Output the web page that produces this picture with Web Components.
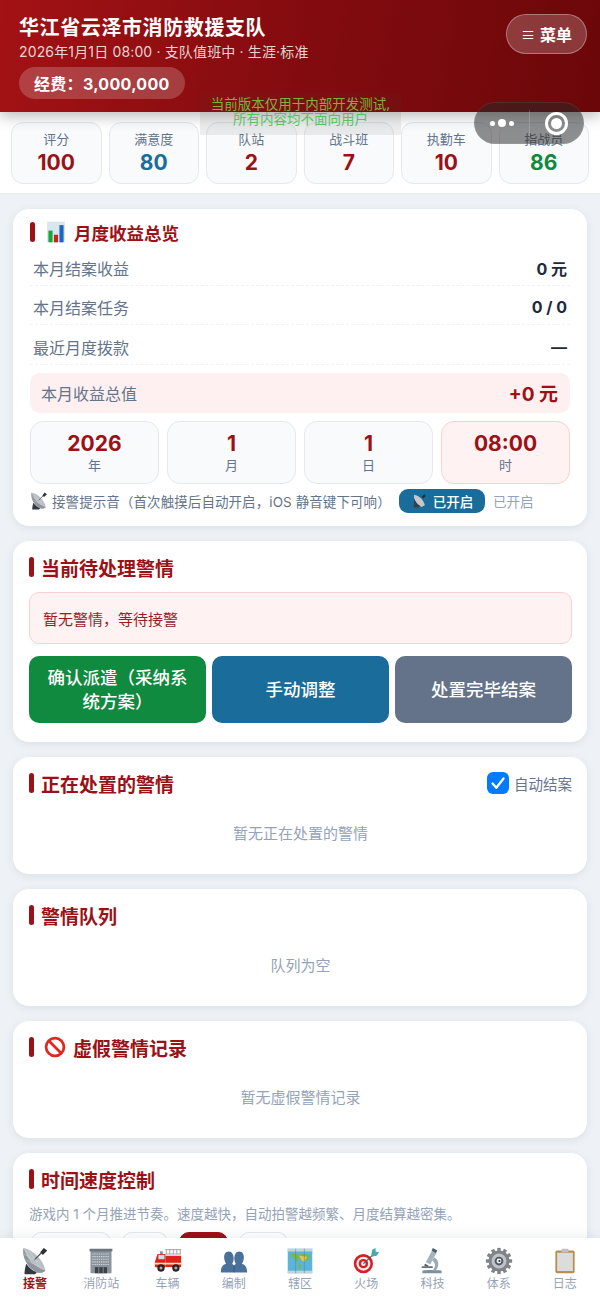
<!DOCTYPE html>
<html lang="zh-CN"><head><meta charset="utf-8"><title>消防救援支队</title>
<style>
html,body{margin:0;height:100%;}
body{font-family:Inter,"Noto Sans CJK SC",sans-serif;background:#eef2f6;overflow:hidden;}
</style></head><body>
<x-app></x-app>
<script>
const ICONS={
dish:`<path d="M3 1C1 9 5 22 18 29c4 1 8 0 10-2C26 15 14 3 3 1z" fill="#b9bfc5"/><path d="M3 1C6 12 15 23 28 27c-2 2-6 3-10 2C5 22 1 9 3 1z" fill="#8f969d"/><path d="M15 15 24 6" stroke="#555" stroke-width="1.500"/><path d="m22 6 4-5 4 3-5 5z" fill="#2e3135"/><path d="M6 19c-1 4-2 7-2 12h12l2-2C13 27 9 23 6 19z" fill="#34393f"/><path d="M4 2l9 17M10 5l10 16M3 8l19 10M6 15l20 10" stroke="#d6dade" stroke-width=".5"/>`,
building:`<rect x="4" y="4" width="24" height="26" fill="#8b949c"/><rect x="3" y="2" width="26" height="3" fill="#6c747c"/><path d="M6 8h20M6 11h20M6 14h20M6 17h20M6 20h20" stroke="#d0d6dc" stroke-width="1.300" stroke-dasharray="1.500 1"/><rect x="9" y="23" width="14" height="7" fill="#3c4248"/><path d="M13.500 23v7M18.500 23v7" stroke="#8b949c"/>`,
truck:`<rect x="13" y="10" width="18" height="13" fill="#e0201c"/><path d="M13 3h18M14 3v5M18 3v5M22 3v5M26 3v5M30 3v5M13 8h18" stroke="#999" stroke-width="1"/><path d="M2 14l2-6h9v15H1v-6z" fill="#e0201c"/><rect x="5" y="9" width="7" height="5" fill="#bfe3ee"/><rect x="7" y="5" width="3" height="3" fill="#4a90c4"/><rect x="1" y="18" width="30" height="2" fill="#f3e8a0"/><circle cx="8" cy="24" r="4.200" fill="#222"/><circle cx="8" cy="24" r="1.800" fill="#aaa"/><circle cx="25" cy="24" r="4.200" fill="#222"/><circle cx="25" cy="24" r="1.800" fill="#aaa"/>`,
busts:`<path d="M1 29c0-6 2-9 6-10-3-3-4-14 3-14 6 0 7 10 4 14l2 2 2-2c-3-4-2-14 4-14 7 0 6 11 3 14 4 1 6 4 6 10z" fill="#4a7199"/><path d="M16 21v8" stroke="#2f587f" stroke-width="1"/>`,
map:`<rect x="2" y="2" width="28" height="28" fill="#5ab4dc"/><path d="M2 2h28v3H2zM2 27h28v3H2z" fill="#c8d2d6"/><path d="M6 7l8 1 1 6-3 4-2-4-4-3zM14 19l3 1-1 6-2-2zM17 7l10 2-1 6-5 1-4-3z" fill="#7db840"/><path d="M15 10l9 1-3 6-3-2z" fill="#eec43c"/><path d="M11 2v28M21 2v28" stroke="#3b87ab" stroke-width=".6"/>`,
dart:`<circle cx="13" cy="19" r="11" fill="#d81f26"/><circle cx="13" cy="19" r="8" fill="#f4f0ee"/><circle cx="13" cy="19" r="5.400" fill="#d81f26"/><circle cx="13" cy="19" r="2.600" fill="#f4f0ee"/><path d="M13 19 24 9" stroke="#555" stroke-width="1.400"/><path d="m22 10 1-7 4-2 0 4 4 1-3 4-6 1z" fill="#4aa8b0"/>`,
scope:`<path d="M5 27c5-1 16-1 22 0v3H5z" fill="#7d909c"/><path d="M19 12c5 3 6 10 1 15h-4c5-4 4-9 0-12z" fill="#9aabb5"/><path d="M16 4l5 3-7 13-5-3z" fill="#a6b4bc"/><path d="m17 1 5 3-1.500 3-5-3z" fill="#4d5f6b"/><path d="M8 19l4 2-1 2-4-2z" fill="#4d5f6b"/><rect x="4" y="22" width="13" height="2" rx="1" fill="#5f7380"/>`,
gear:`<g fill="#808489"><circle cx="16" cy="16" r="12"/><rect x="14" y="1" width="4" height="30"/><rect x="14" y="1" width="4" height="30" transform="rotate(30 16 16)"/><rect x="14" y="1" width="4" height="30" transform="rotate(60 16 16)"/><rect x="14" y="1" width="4" height="30" transform="rotate(90 16 16)"/><rect x="14" y="1" width="4" height="30" transform="rotate(120 16 16)"/><rect x="14" y="1" width="4" height="30" transform="rotate(150 16 16)"/></g><circle cx="16" cy="16" r="8.500" fill="#c0c4c8"/><circle cx="16" cy="16" r="5" fill="#55595e"/><circle cx="16" cy="16" r="2.800" fill="#f2f2f2"/><circle cx="16.500" cy="16" r="1.200" fill="#333"/>`,
clip:`<rect x="5" y="4" width="22" height="26" rx="2" fill="#b98c4e"/><rect x="7" y="6.500" width="18" height="21" fill="#dcdcdc"/><rect x="12" y="2" width="8" height="4" rx="1" fill="#c0c0c0"/>`,
chart:`<rect x="3" y="1" width="26" height="30" fill="#d9e6ee"/><rect x="5" y="14" width="6" height="17" fill="#14a83a"/><rect x="13" y="20" width="6" height="11" fill="#d0201c"/><rect x="21" y="6" width="6" height="25" fill="#1a66c0"/>`,
ban:`<circle cx="16" cy="16" r="13" fill="#fff" stroke="#e0281f" stroke-width="4"/><path d="M7 7l18 18" stroke="#e0281f" stroke-width="4"/>`,
speaker:`<path d="M6 5c-2 7 3 18 14 23l6-3C24 15 15 6 6 5z" fill="#c3c8cd"/><path d="M6 12c2 6 6 11 11 14l-3 3H5z" fill="#3a3f45"/><path d="m20 9 5-5 3 3-5 5z" fill="#2a2d31"/>`
};
const def=(n,html,extra)=>{customElements.define(n,class extends HTMLElement{
  constructor(){super();this.attachShadow({mode:'open'});}
  connectedCallback(){this.shadowRoot.innerHTML=typeof html==='function'?html(this):html;extra&&extra(this);}
});};
const a=(e,n,d='')=>e.getAttribute(n)??d;

def('x-icon',e=>`<style>:host{display:inline-flex;flex:none;width:${a(e,'size',24)}px;height:${a(e,'size',24)}px}svg{width:100%;height:100%;display:block}</style><svg viewBox="0 0 32 32" aria-hidden="true">${ICONS[a(e,'name')]||''}</svg>`);

def('x-header',`<style>
:host{display:flex;justify-content:space-between;align-items:flex-start;box-sizing:border-box;height:112px;padding:14px 13px 0 19px;color:#fff;background:linear-gradient(100deg,#a31214 0%,#860c10 45%,#6b0709 100%);box-shadow:0 4px 14px rgba(0,0,0,.28);position:relative;z-index:2;flex:none}
.t{font-size:20px;font-weight:700;line-height:28px;letter-spacing:.6px}
.s{font-size:14px;line-height:20px;color:rgba(255,255,255,.82);letter-spacing:.15px}
.p{display:inline-flex;align-items:center;height:32px;margin-top:5px;padding:0 15px;border-radius:16px;background:rgba(255,255,255,.2);font-size:16px;font-weight:700;letter-spacing:.3px}
.m{box-sizing:border-box;width:81px;height:40px;border-radius:20px;background:rgba(255,255,255,.2);border:1.500px solid rgba(255,255,255,.32);display:flex;align-items:center;justify-content:center;gap:5px;font-size:16px;font-weight:700}
</style><div><div class="t">华江省云泽市消防救援支队</div><div class="s">2026年1月1日 08:00 · 支队值班中 · 生涯·标准</div><div class="p">经费：3,000,000</div></div><div class="m"><span style="font-size:14px;font-weight:400">≡</span><span>菜单</span></div>`);

def('x-stat',e=>`<style>:host{display:flex;flex-direction:column;align-items:center;justify-content:center;box-sizing:border-box;height:62px;border:1.500px solid #e4e9ef;border-radius:12px;background:#f8fafc;min-width:0}
.l{font-size:13px;line-height:18px;color:#64748b}.v{font-size:21px;font-weight:700;line-height:28px;padding-top:1px;color:${a(e,'color','#9b1116')}}</style><div class="l">${a(e,'label')}</div><div class="v">${a(e,'value')}</div>`);

def('x-stats',`<style>:host{display:grid;grid-template-columns:repeat(6,1fr);gap:7px;box-sizing:border-box;height:82px;padding:10px 11px;background:#fff;flex:none;border-bottom:1px solid #e8ecf1}</style><slot></slot>`);

def('x-card',e=>`<style>:host{display:block;box-sizing:border-box;background:#fff;border-radius:16px;padding:${a(e,'pad','13px 15px 0 16px')};box-shadow:0 2px 8px rgba(30,50,80,.09);height:${a(e,'h','auto')};flex:none}
.h{display:flex;align-items:center;height:26px;margin-bottom:1px;color:#9b1116;font-size:${a(e,'fs','19px')};font-weight:700;gap:7px}
.b{width:5px;height:20px;border-radius:3px;background:#9b1116;flex:none}
x-icon{margin-left:3px}
.g{flex:1}
</style><div class="h"><span class="b"></span>${a(e,'icon')?`<x-icon name="${a(e,'icon')}" size="22"></x-icon>`:''}<span>${a(e,'title')}</span><span class="g"></span><slot name="side"></slot></div><slot></slot>`);

def('x-row',e=>`<style>:host{display:flex;align-items:center;justify-content:space-between;box-sizing:border-box;height:39.600px;padding:5px 3px 0;border-bottom:1.500px dashed #eef1f5;font-size:16px;color:#64748b}
b{font-weight:700;color:#1e293b}</style><span>${a(e,'label')}</span><b>${a(e,'value')}</b>`);

def('x-total',e=>`<style>:host{display:flex;align-items:center;justify-content:space-between;box-sizing:border-box;height:40px;margin-top:8px;padding:0 12px 0 11px;border-radius:10px;background:#fef0f0;font-size:16px;color:#64748b}
b{font-size:19px;font-weight:700;color:#9b1116}</style><span>${a(e,'label')}</span><b>${a(e,'value')}</b>`);

def('x-date',e=>{const on=e.hasAttribute('on');return `<style>:host{display:flex;flex-direction:column;align-items:center;justify-content:center;box-sizing:border-box;height:63px;border-radius:13px;border:1.500px solid ${on?'#fbd0d0':'#e4e9ef'};background:${on?'#fef2f2':'#f8fafc'}}
.v{font-size:21px;font-weight:700;line-height:26px;padding-top:1px;color:#9b1116}.l{font-size:13px;line-height:17px;color:#64748b}</style><div class="v">${a(e,'value')}</div><div class="l">${a(e,'label')}</div>`;});

def('x-grid',e=>`<style>:host{display:grid;grid-template-columns:repeat(${a(e,'n',4)},1fr);gap:${a(e,'gap','8px')};margin-top:${a(e,'mt','8px')}}</style><slot></slot>`);

def('x-sound',`<style>:host{display:flex;align-items:center;height:24px;margin-top:5px;font-size:13.500px;color:#64748b;white-space:nowrap}
.t{margin-left:4px;width:331px;letter-spacing:.08px}
.p{box-sizing:border-box;margin-left:16px;height:24px;width:86px;border-radius:9px;background:#1a6c9a;color:#fff;display:flex;align-items:center;justify-content:center;gap:5px;font-weight:500}
.o{margin-left:8px;color:#94a3b8}</style><x-icon name="dish" size="18"></x-icon><span class="t">接警提示音（首次触摸后自动开启，iOS 静音键下可响）</span><span class="p"><x-icon name="speaker" size="17"></x-icon>已开启</span><span class="o">已开启</span>`);

def('x-alert',e=>`<style>:host{display:flex;align-items:center;box-sizing:border-box;height:52px;margin-top:12px;padding:0 13px;border-radius:10px;border:1.500px solid #fbd0d0;background:#fef2f2;font-size:15px;color:#9b1c1f}</style><slot></slot>`);

def('x-action',e=>`<style>:host{display:flex;align-items:center;justify-content:center;text-align:center;box-sizing:border-box;height:67px;padding:0 14px;border-radius:10px;background:${a(e,'bg')};color:#fff;font-size:17.500px;font-weight:500;line-height:24px}</style><slot></slot>`);

def('x-check',`<style>:host{display:flex;align-items:center;gap:5px;font-size:14.500px;font-weight:400;color:#64748b;line-height:20px}
.c{width:22px;height:22px;border-radius:6px;background:#007aff;display:block}</style><svg class="c" viewBox="0 0 22 22" aria-hidden="true"><path d="M5.500 11.500l3.800 4.300 7.200-9.300" fill="none" stroke="#fff" stroke-width="2.300" stroke-linecap="round" stroke-linejoin="round"/></svg><span style="position:relative;top:2px">自动结案</span>`);

def('x-empty',`<style>:host{display:block;text-align:center;font-size:15px;line-height:20px;color:#94a3b8;padding:27px 0 16px}</style><slot></slot>`);

def('x-speed',e=>`<style>:host{display:inline-flex;align-items:center;justify-content:center;box-sizing:border-box;height:40px;width:${a(e,'w')}px;border-radius:10px;border:1.500px solid ${e.hasAttribute('on')?'#9b1116':'#e2e8f0'};background:${e.hasAttribute('on')?'#9b1116':'#fff'}}</style>`);

def('x-tab',e=>{const on=e.hasAttribute('on');return `<style>:host{display:flex;flex-direction:column;align-items:center;min-width:0}
.l{font-size:12px;line-height:16px;margin-top:1px;color:${on?'#9b1116':'#94a3b8'};font-weight:${on?700:400}}</style><x-icon name="${a(e,'icon')}" size="28"></x-icon><div class="l">${a(e,'label')}</div>`;});

def('x-tabbar',`<style>:host{display:grid;grid-template-columns:repeat(9,1fr);box-sizing:border-box;position:absolute;left:0;right:0;bottom:0;height:65px;padding:9px 2px 0;background:#fff;box-shadow:0 -2px 10px rgba(30,50,80,.08);z-index:3}</style><slot></slot>`);

def('x-notice',`<style>:host{position:absolute;left:200px;top:93px;width:201px;height:42px;z-index:5;background:rgba(70,70,70,.09);color:#55c45e;font-size:13.500px;line-height:15px;text-align:center;padding-top:4px;box-sizing:border-box;white-space:nowrap}</style><div style="color:#7fb03c">当前版本仅用于内部开发测试,</div><div>所有内容均不面向用户</div>`);

def('x-capsule',`<style>:host{position:absolute;left:474px;top:102px;width:110px;height:42px;z-index:6;box-sizing:border-box;border-radius:21px;background:rgba(40,40,40,.52);border:1px solid rgba(255,255,255,.08);display:flex;align-items:center}
.a,.b{flex:1;display:flex;align-items:center;justify-content:center;height:100%}
.d{width:5px;height:5px;border-radius:50%;background:#fff}.d.m{width:8px;height:8px;margin:0 3px}
.s{width:1px;height:26px;background:rgba(255,255,255,.18)}
.r{box-sizing:border-box;width:23px;height:23px;border-radius:50%;border:3px solid #fff;display:flex;align-items:center;justify-content:center}
.r i{width:11px;height:11px;border-radius:50%;background:#fff;display:block}</style>
<div class="a"><span class="d"></span><span class="d m"></span><span class="d"></span></div><span class="s"></span><div class="b"><span class="r"><i></i></span></div>`);

def('x-app',`<style>:host{display:flex;flex-direction:column;position:relative;height:1303px;overflow:hidden;background:#eef2f6}
main{flex:1;min-height:0;overflow:hidden;display:flex;flex-direction:column;gap:15px;padding:15px 13px 0}
.d{font-size:13.500px;line-height:20px;color:#94a3b8;margin-top:12px}
.sp{display:flex;gap:11px;margin:8px 0 0 2px}
</style>
<x-header></x-header>
<x-stats>
<x-stat label="评分" value="100"></x-stat><x-stat label="满意度" value="80" color="#1a6c9a"></x-stat><x-stat label="队站" value="2"></x-stat><x-stat label="战斗班" value="7"></x-stat><x-stat label="执勤车" value="10"></x-stat><x-stat label="指战员" value="86" color="#0f8a3e"></x-stat>
</x-stats>
<main>
<x-card title="月度收益总览" icon="chart" h="317px" fs="17.500px" pad="10px 17px 0 17px">
<x-row label="本月结案收益" value="0 元"></x-row><x-row label="本月结案任务" value="0 / 0"></x-row><x-row label="最近月度拨款" value="—"></x-row>
<x-total label="本月收益总值" value="+0 元"></x-total>
<x-grid n="4"><x-date value="2026" label="年"></x-date><x-date value="1" label="月"></x-date><x-date value="1" label="日"></x-date><x-date value="08:00" label="时" on></x-date></x-grid>
<x-sound></x-sound>
</x-card>
<x-card title="当前待处理警情" h="201px">
<x-alert>暂无警情，等待接警</x-alert>
<x-grid n="3" gap="6px" mt="12px"><x-action bg="#0f8a3e">确认派遣（采纳系统方案）</x-action><x-action bg="#1a6c9a">手动调整</x-action><x-action bg="#64728a">处置完毕结案</x-action></x-grid>
</x-card>
<x-card title="正在处置的警情" h="117px"><x-check slot="side"></x-check><x-empty>暂无正在处置的警情</x-empty></x-card>
<x-card title="警情队列" h="117px"><x-empty>队列为空</x-empty></x-card>
<x-card title="虚假警情记录" icon="ban" h="117px"><x-empty>暂无虚假警情记录</x-empty></x-card>
<x-card title="时间速度控制" h="140px"><div class="d">游戏内 1 个月推进节奏。速度越快，自动拍警越频繁、月度结算越密集。</div>
<div class="sp"><x-speed w="80"></x-speed><x-speed w="46"></x-speed><x-speed w="49" on></x-speed><x-speed w="49"></x-speed></div></x-card>
</main>
<x-tabbar>
<x-tab icon="dish" label="接警" on></x-tab><x-tab icon="building" label="消防站"></x-tab><x-tab icon="truck" label="车辆"></x-tab><x-tab icon="busts" label="编制"></x-tab><x-tab icon="map" label="辖区"></x-tab><x-tab icon="dart" label="火场"></x-tab><x-tab icon="scope" label="科技"></x-tab><x-tab icon="gear" label="体系"></x-tab><x-tab icon="clip" label="日志"></x-tab>
</x-tabbar>
<x-notice></x-notice>
<x-capsule></x-capsule>`);
</script>
</body></html>
